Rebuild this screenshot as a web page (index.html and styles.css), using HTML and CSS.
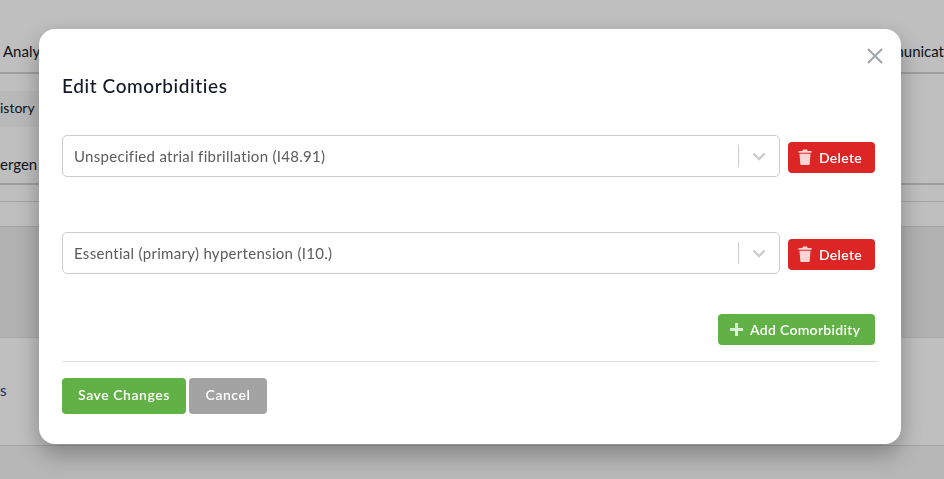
FILE: index.html
```html
<!DOCTYPE html>
<html lang="en">
<head>
    <meta charset="UTF-8">
    <meta name="viewport" content="width=device-width, initial-scale=1.0">
    <title>Edit Comorbidities</title>
    <link rel="stylesheet" href="styles.css">
</head>
<body>
    <div class="page">
        <div class="tabs">
            <span class="tab-left">Analytics</span>
            <span class="tab-right">Communicat</span>
        </div>
        <div class="subnav">
            <div class="subnav-row"><span class="chip">istory</span></div>
            <div class="subnav-row"><span class="subnav-link">ergen</span></div>
        </div>
        <div class="thin-row"></div>
        <div class="table-head"></div>
        <div class="table-band"></div>
        <div class="table-row"><span class="row-link">s</span></div>
        <div class="page-foot"></div>
    </div>

    <div class="overlay"></div>

    <div class="modal">
        <button class="modal-close" aria-label="Close">
            <svg width="16" height="16" viewBox="0 0 16 16"><path d="M1 1 L15 15 M15 1 L1 15" stroke="#9ca3af" stroke-width="2" fill="none"/></svg>
        </button>
        <h2 class="modal-title">Edit Comorbidities</h2>

        <div class="field-row">
            <div class="select">
                <span class="select-value">Unspecified atrial fibrillation (I48.91)</span>
                <span class="select-sep"></span>
                <svg class="select-arrow" width="14" height="9" viewBox="0 0 14 9"><path d="M1.5 1.5 L7 7 L12.5 1.5" stroke="#cccccc" stroke-width="2.4" fill="none"/></svg>
            </div>
            <button class="btn btn-red">
                <svg class="btn-icon" width="14" height="16" viewBox="0 0 14 16"><path d="M5 0.5 H9 L9.7 2 H13.5 V3.7 H0.5 V2 H4.3 Z M1.5 4.8 H12.5 L11.7 15 Q11.6 16 10.6 16 H3.4 Q2.4 16 2.3 15 Z" fill="#fbd5d5"/></svg>
                Delete
            </button>
        </div>

        <div class="field-row">
            <div class="select">
                <span class="select-value">Essential (primary) hypertension (I10.)</span>
                <span class="select-sep"></span>
                <svg class="select-arrow" width="14" height="9" viewBox="0 0 14 9"><path d="M1.5 1.5 L7 7 L12.5 1.5" stroke="#cccccc" stroke-width="2.4" fill="none"/></svg>
            </div>
            <button class="btn btn-red">
                <svg class="btn-icon" width="14" height="16" viewBox="0 0 14 16"><path d="M5 0.5 H9 L9.7 2 H13.5 V3.7 H0.5 V2 H4.3 Z M1.5 4.8 H12.5 L11.7 15 Q11.6 16 10.6 16 H3.4 Q2.4 16 2.3 15 Z" fill="#fbd5d5"/></svg>
                Delete
            </button>
        </div>

        <div class="add-row">
            <button class="btn btn-green">
                <svg class="btn-icon" width="13" height="13" viewBox="0 0 13 13"><path d="M5 0 H8 V5 H13 V8 H8 V13 H5 V8 H0 V5 H5 Z" fill="#d9f0d3"/></svg>
                Add Comorbidity
            </button>
        </div>

        <div class="modal-footer">
            <button class="btn-lg btn-green">Save Changes</button>
            <button class="btn-lg btn-gray">Cancel</button>
        </div>
    </div>
</body>
</html>
```

FILE: styles.css
```css
* {
    box-sizing: border-box;
}

body {
    margin: 0;
    height: 479px;
    overflow: hidden;
    font-family: 'Lato', 'Noto Sans', sans-serif;
    background-color: #fff;
}

.page {
    height: 479px;
    overflow: hidden;
    color: #111827;
    font-size: 15px;
}

.tabs {
    height: 74px;
    display: flex;
    justify-content: space-between;
    align-items: flex-end;
    padding: 0 0 12px 3px;
    border-bottom: 2px solid #d4d4d4;
    white-space: nowrap;
}

.subnav {
    height: 111px;
    border-bottom: 2px solid #d4d4d4;
}

.subnav-row {
    height: 55px;
    display: flex;
    align-items: center;
}

.chip {
    width: 60px;
    height: 36px;
    margin-top: 14px;
    font-size: 14px;
    line-height: 34px;
    background-color: #f7f7f7;
}

.subnav-link {
    margin-top: 15px;
}

.thin-row {
    height: 17px;
    border-bottom: 1px solid #dcdcdc;
}

.table-head {
    height: 25px;
    border-bottom: 1px solid #dcdcdc;
}

.table-band {
    height: 111px;
    background-color: #ececec;
    border-bottom: 1px solid #e2e2e2;
}

.table-row {
    height: 108px;
    display: flex;
    align-items: center;
    padding-bottom: 4px;
    border-bottom: 1px solid #dcdcdc;
}

.row-link {
    color: #1e3a8a;
}

.page-foot {
    height: 34px;
    background-color: #f5f5f5;
}

.overlay {
    position: fixed;
    inset: 0;
    background-color: rgba(0, 0, 0, 0.25);
}

.modal {
    position: fixed;
    left: 39px;
    top: 29px;
    width: 862px;
    height: 415px;
    padding: 0 23px;
    background-color: #fff;
    border-radius: 16px;
    box-shadow: 0 10px 25px rgba(0, 0, 0, 0.3);
}

.modal-close {
    position: absolute;
    top: 19px;
    right: 18px;
    padding: 0;
    display: flex;
    border: 0;
    background: none;
}

.modal-title {
    margin: 0;
    padding-top: 44px;
    height: 106px;
    font-size: 19px;
    line-height: 25px;
    font-weight: 500;
    color: #111827;
    letter-spacing: 0.6px;
}

.field-row {
    display: flex;
    align-items: flex-start;
    height: 42px;
    margin-bottom: 55px;
    padding-right: 3px;
}

.select {
    flex: 1;
    height: 42px;
    display: flex;
    align-items: center;
    padding: 0 13px 0 11px;
    border: 1px solid #cccccc;
    border-radius: 5px;
}

.select-value {
    flex: 1;
    font-size: 15px;
    color: #5c5c5c;
    letter-spacing: 0.3px;
}

.select-sep {
    width: 1px;
    height: 22px;
    margin-right: 13px;
    background-color: #cccccc;
}

.btn {
    display: flex;
    align-items: center;
    height: 31px;
    border: 0;
    border-radius: 4px;
    color: #fff;
    font-family: inherit;
    font-size: 14px;
    font-weight: 600;
    letter-spacing: 0.3px;
}

.btn-red {
    width: 87px;
    margin: 7px 0 0 8px;
    padding: 0 0 1px 10px;
    background-color: #dc2626;
}

.btn-icon {
    margin-right: 7px;
}

.btn-green {
    background-color: #62b146;
}

.add-row {
    display: flex;
    justify-content: flex-end;
    margin-top: -15px;
    padding-right: 3px;
}

.add-row .btn {
    width: 157px;
    padding: 0 0 1px 12px;
}

.modal-footer {
    display: flex;
    gap: 3px;
    margin-top: 16px;
    padding-top: 16px;
    border-top: 1px solid #e2e2e2;
}

.btn-lg {
    height: 36px;
    padding: 0 0 3px;
    border: 0;
    border-radius: 4px;
    color: #fff;
    font-family: inherit;
    font-size: 14px;
    font-weight: 600;
    letter-spacing: 0.55px;
}

.btn-lg.btn-green {
    width: 124px;
}

.btn-gray {
    width: 78px;
    background-color: #a3a3a3;
}
```
